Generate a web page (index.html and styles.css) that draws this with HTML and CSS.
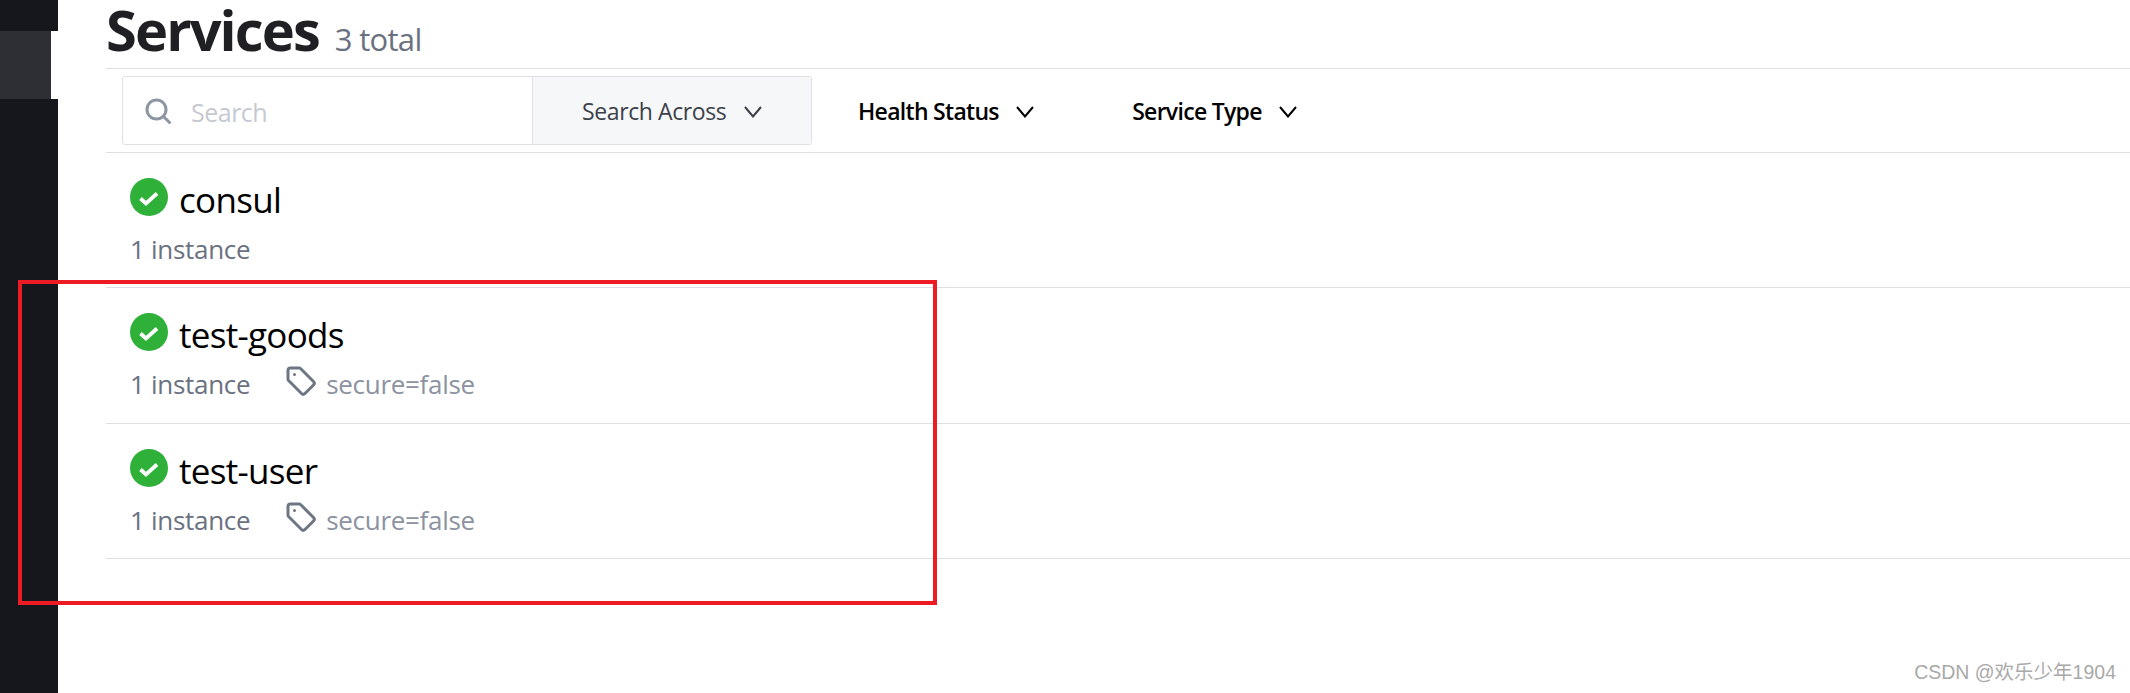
FILE: index.html
```html
<!DOCTYPE html>
<html lang="en">
<head>
    <meta charset="UTF-8">
    <meta name="viewport" content="width=device-width, initial-scale=1.0">
    <title>Services</title>
    <link rel="stylesheet" href="styles.css">
</head>
<body>
    <div class="app-container">
        <div class="sidebar">
            <div class="nav-active"></div>
        </div>
        <div class="content">
            <div class="page-header">
                <h1>Services</h1>
                <span class="total">3 total</span>
            </div>
            <div class="filter-bar">
                <div class="search-group">
                    <div class="search-field">
                        <svg class="search-icon" viewBox="0 0 26 26" width="26" height="26" fill="none" stroke="#8e96a3" stroke-width="3" stroke-linecap="round"><circle cx="11.5" cy="11.5" r="9.5"/><path d="M18.500 18.500l6 6"/></svg>
                        <span class="placeholder">Search</span>
                    </div>
                    <button class="search-across">Search Across <svg class="chevron" viewBox="0 0 18 12" width="18" height="12" fill="none" stroke="currentColor" stroke-width="2"><path d="M1 1l8 9.500 8-9.500"/></svg></button>
                </div>
                <button class="filter-btn health">Health Status <svg class="chevron" viewBox="0 0 18 12" width="18" height="12" fill="none" stroke="currentColor" stroke-width="2"><path d="M1 1l8 9.500 8-9.500"/></svg></button>
                <button class="filter-btn">Service Type <svg class="chevron" viewBox="0 0 18 12" width="18" height="12" fill="none" stroke="currentColor" stroke-width="2"><path d="M1 1l8 9.500 8-9.500"/></svg></button>
            </div>
            <ul class="service-list">
                <li class="service-row">
                    <div class="service-name">
                        <svg class="check-icon" viewBox="0 0 38 38" width="38" height="38"><circle cx="19" cy="19" r="19" fill="#2eb039"/><path d="M10.500 20.500l5.500 5 11-10" fill="none" stroke="#fff" stroke-width="3.800"/></svg>
                        <span>consul</span>
                    </div>
                    <div class="service-meta"><span>1 instance</span></div>
                </li>
                <li class="service-row">
                    <div class="service-name">
                        <svg class="check-icon" viewBox="0 0 38 38" width="38" height="38"><circle cx="19" cy="19" r="19" fill="#2eb039"/><path d="M10.500 20.500l5.500 5 11-10" fill="none" stroke="#fff" stroke-width="3.800"/></svg>
                        <span>test-goods</span>
                    </div>
                    <div class="service-meta">
                        <span>1 instance</span>
                        <svg class="tag-icon" viewBox="0 0 30 30" width="30" height="30" fill="none" stroke="#6f7683" stroke-width="3" stroke-linejoin="round"><path d="M2 4.500a2.500 2.500 0 0 1 2.500-2.500h8.500a2.500 2.500 0 0 1 1.800.8l12.700 12.700a2.500 2.500 0 0 1 0 3.500l-8.500 8.500a2.500 2.500 0 0 1-3.500 0l-12.700-12.700a2.500 2.500 0 0 1-.8-1.800z"/><circle cx="8.500" cy="8.500" r="1.500" fill="#6f7683" stroke="none"/></svg>
                        <span class="tag-text">secure=false</span>
                    </div>
                </li>
                <li class="service-row">
                    <div class="service-name">
                        <svg class="check-icon" viewBox="0 0 38 38" width="38" height="38"><circle cx="19" cy="19" r="19" fill="#2eb039"/><path d="M10.500 20.500l5.500 5 11-10" fill="none" stroke="#fff" stroke-width="3.800"/></svg>
                        <span>test-user</span>
                    </div>
                    <div class="service-meta">
                        <span>1 instance</span>
                        <svg class="tag-icon" viewBox="0 0 30 30" width="30" height="30" fill="none" stroke="#6f7683" stroke-width="3" stroke-linejoin="round"><path d="M2 4.500a2.500 2.500 0 0 1 2.500-2.500h8.500a2.500 2.500 0 0 1 1.800.8l12.700 12.700a2.500 2.500 0 0 1 0 3.500l-8.500 8.500a2.500 2.500 0 0 1-3.500 0l-12.700-12.700a2.500 2.500 0 0 1-.8-1.800z"/><circle cx="8.500" cy="8.500" r="1.500" fill="#6f7683" stroke="none"/></svg>
                        <span class="tag-text">secure=false</span>
                    </div>
                </li>
            </ul>
        </div>
    </div>
    <div class="red-box"></div>
    <div class="watermark">CSDN @欢乐少年1904</div>
</body>
</html>
```

FILE: styles.css
```css
body {
    font-family: "Open Sans", "Noto Sans", sans-serif;
    margin: 0;
    padding: 0;
    background-color: #fff;
    overflow: hidden;
}

.app-container {
    display: flex;
    height: 693px;
}

.sidebar {
    width: 58px;
    flex-shrink: 0;
    padding-top: 31px;
    box-sizing: border-box;
    background-color: #16171c;
}

.nav-active {
    height: 68px;
    background: linear-gradient(to right, #2e2f34 51px, #fff 51px);
}

.content {
    flex: 1;
    margin-left: 48px;
}

.page-header {
    display: flex;
    align-items: baseline;
    height: 69px;
    box-sizing: border-box;
    border-bottom: 1px solid #dedfe6;
}

.page-header h1 {
    margin: 0;
    font-size: 56px;
    line-height: 58px;
    font-weight: 700;
    letter-spacing: -1.900px;
    color: #1f2024;
}

.total {
    margin-left: 16px;
    font-size: 31px;
    letter-spacing: -0.700px;
    color: #6a7180;
}

.filter-bar {
    display: flex;
    align-items: center;
    height: 84px;
    padding-left: 16px;
    border-bottom: 1px solid #dedfe6;
    box-sizing: border-box;
}

.search-group {
    display: flex;
    width: 690px;
    height: 69px;
    box-sizing: border-box;
    border: 1px solid #dedfe6;
    border-radius: 3px;
}

.search-field {
    display: flex;
    align-items: center;
    width: 410px;
    padding-left: 22px;
    box-sizing: border-box;
    border-right: 1px solid #dedfe6;
}

.placeholder {
    margin-left: 20px;
    margin-top: 3px;
    font-size: 25px;
    letter-spacing: -0.500px;
    color: #c5c9d1;
}

.search-across {
    flex: 1;
    border: none;
    background-color: #f6f7f9;
    font-family: inherit;
    font-size: 23px;
    letter-spacing: -0.400px;
    color: #3c4049;
    padding: 0;
}

.filter-btn {
    border: none;
    background: none;
    padding: 0;
    font-family: inherit;
    font-size: 23px;
    font-weight: 600;
    letter-spacing: -0.700px;
    color: #000;
    margin-left: 98px;
}

.filter-btn.health {
    margin-left: 46px;
}

.chevron {
    margin-left: 12px;
    vertical-align: 2px;
}

.service-list {
    list-style-type: none;
    margin: 0;
    padding: 0;
}

.service-row {
    height: 135.250px;
    box-sizing: border-box;
    padding: 25px 0 0 24px;
    border-bottom: 1px solid #dedfe6;
}

.service-name {
    display: flex;
    align-items: flex-start;
    font-size: 35px;
    line-height: 44px;
    letter-spacing: -0.700px;
    color: #000;
}

.check-icon {
    margin-right: 11px;
}

.service-meta {
    display: flex;
    align-items: center;
    margin-top: 7px;
    font-size: 26px;
    line-height: 40px;
    letter-spacing: -0.300px;
    color: #6a7180;
}

.tag-icon {
    margin-left: 36px;
    margin-right: 10px;
    margin-top: -6px;
}

.tag-text {
    color: #8b93a0;
}

.red-box {
    position: absolute;
    left: 18px;
    top: 280px;
    width: 919px;
    height: 325px;
    border: 4px solid #ed1c24;
    box-sizing: border-box;
}

.watermark {
    position: absolute;
    right: 14px;
    top: 656px;
    font-family: "Liberation Sans", "Noto Sans CJK SC", sans-serif;
    font-size: 19.500px;
    color: #a9a9a9;
}
```
